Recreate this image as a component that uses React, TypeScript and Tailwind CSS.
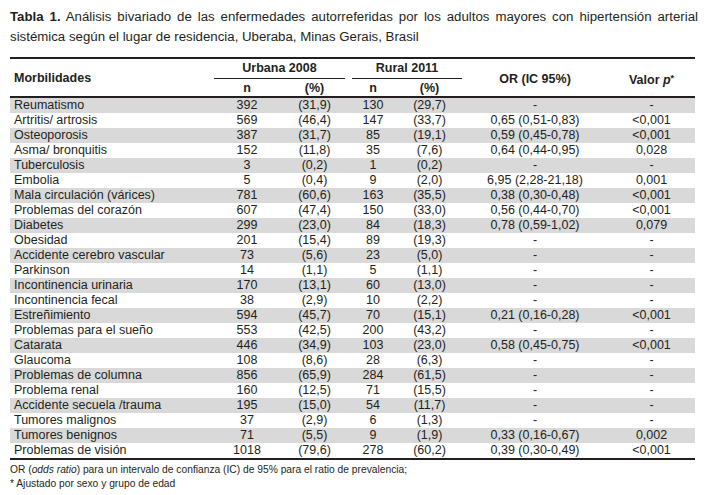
import React from "react";

// Tabla 1: morbilidades autorreferidas, urbana 2008 vs rural 2011
type Row = [string, string, string, string, string, string, string];

const rows: Row[] = [
  ["Reumatismo", "392", "(31,9)", "130", "(29,7)", "-", "-"],
  ["Artritis/ artrosis", "569", "(46,4)", "147", "(33,7)", "0,65 (0,51-0,83)", "<0,001"],
  ["Osteoporosis", "387", "(31,7)", "85", "(19,1)", "0,59 (0,45-0,78)", "<0,001"],
  ["Asma/ bronquitis", "152", "(11,8)", "35", "(7,6)", "0,64 (0,44-0,95)", "0,028"],
  ["Tuberculosis", "3", "(0,2)", "1", "(0,2)", "-", "-"],
  ["Embolia", "5", "(0,4)", "9", "(2,0)", "6,95 (2,28-21,18)", "0,001"],
  ["Mala circulación (várices)", "781", "(60,6)", "163", "(35,5)", "0,38 (0,30-0,48)", "<0,001"],
  ["Problemas del corazón", "607", "(47,4)", "150", "(33,0)", "0,56 (0,44-0,70)", "<0,001"],
  ["Diabetes", "299", "(23,0)", "84", "(18,3)", "0,78 (0,59-1,02)", "0,079"],
  ["Obesidad", "201", "(15,4)", "89", "(19,3)", "-", "-"],
  ["Accidente cerebro vascular", "73", "(5,6)", "23", "(5,0)", "-", "-"],
  ["Parkinson", "14", "(1,1)", "5", "(1,1)", "-", "-"],
  ["Incontinencia urinaria", "170", "(13,1)", "60", "(13,0)", "-", "-"],
  ["Incontinencia fecal", "38", "(2,9)", "10", "(2,2)", "-", "-"],
  ["Estreñimiento", "594", "(45,7)", "70", "(15,1)", "0,21 (0,16-0,28)", "<0,001"],
  ["Problemas para el sueño", "553", "(42,5)", "200", "(43,2)", "-", "-"],
  ["Catarata", "446", "(34,9)", "103", "(23,0)", "0,58 (0,45-0,75)", "<0,001"],
  ["Glaucoma", "108", "(8,6)", "28", "(6,3)", "-", "-"],
  ["Problemas de columna", "856", "(65,9)", "284", "(61,5)", "-", "-"],
  ["Problema renal", "160", "(12,5)", "71", "(15,5)", "-", "-"],
  ["Accidente secuela /trauma", "195", "(15,0)", "54", "(11,7)", "-", "-"],
  ["Tumores malignos", "37", "(2,9)", "6", "(1,3)", "-", "-"],
  ["Tumores benignos", "71", "(5,5)", "9", "(1,9)", "0,33 (0,16-0,67)", "0,002"],
  ["Problemas de visión", "1018", "(79,6)", "278", "(60,2)", "0,39 (0,30-0,49)", "<0,001"],
];

export default function App() {
  return (
    <div className="w-[708px] h-[495px] bg-white px-[10px] pt-[7px] text-[#231f20] font-['Liberation_Sans',Arial,sans-serif]">
      {/* título */}
      <div className="text-[13.25px] leading-[20px]">
        <p className="whitespace-nowrap text-justify [text-align-last:justify]">
          <b>Tabla 1.</b> Análisis bivariado de las enfermedades autorreferidas por los adultos mayores con hipertensión arterial
        </p>
        <p>sistémica según el lugar de residencia, Uberaba, Minas Gerais, Brasil</p>
      </div>

      <table className="mt-[10px] w-[685px] table-fixed border-collapse text-[12.5px] leading-[15px]">
        <colgroup>
          <col className="w-[204px]" />
          <col className="w-[66px]" />
          <col className="w-[69px]" />
          <col className="w-[48px]" />
          <col className="w-[65px]" />
          <col className="w-[146px]" />
          <col className="w-[87px]" />
        </colgroup>
        <thead>
          <tr className="border-t-2 border-[#231f20]">
            <th rowSpan={2} className="text-left font-bold pl-[4px] pt-[2px]">Morbilidades</th>
            <th colSpan={2} className="p-0 font-bold h-[19px] align-bottom">
              <div className="mr-[4px] border-b border-[#231f20] pb-[2px] pt-[2px]">Urbana 2008</div>
            </th>
            <th colSpan={2} className="p-0 font-bold h-[19px] align-bottom">
              <div className="ml-[3px] border-b border-[#231f20] pb-[2px] pt-[2px]">Rural 2011</div>
            </th>
            <th rowSpan={2} className="font-bold pt-[3px]">OR (IC 95%)</th>
            <th rowSpan={2} className="font-bold pt-[4px]">
              Valor <i>p</i>
              <span className="text-[9px] align-[3px]">*</span>
            </th>
          </tr>
          <tr className="border-b-2 border-[#231f20]">
            <th className="font-bold h-[18px] pt-[1px]">n</th>
            <th className="font-bold pt-[1px]">(%)</th>
            <th className="font-bold pt-[1px]">n</th>
            <th className="font-bold pt-[1px]">(%)</th>
          </tr>
        </thead>
        <tbody className="border-b-2 border-[#231f20]">
          {rows.map((r, i) => (
            <tr key={r[0]} className={i % 2 === 0 ? "bg-[#d9d9d9]" : "bg-white"}>
              <td className="h-[15px] p-0 pl-[4px] whitespace-nowrap">{r[0]}</td>
              <td className="p-0 text-center">{r[1]}</td>
              <td className="p-0 text-center">{r[2]}</td>
              <td className="p-0 text-center">{r[3]}</td>
              <td className="p-0 text-center">{r[4]}</td>
              <td className="p-0 text-center">{r[5]}</td>
              <td className="p-0 text-center">{r[6]}</td>
            </tr>
          ))}
        </tbody>
      </table>

      {/* notas */}
      <div className="mt-[3px] text-[10.25px] leading-[14px]">
        <p>
          OR (<i>odds ratio</i>) para un intervalo de confianza (IC) de 95% para el ratio de prevalencia;
        </p>
        <p>* Ajustado por sexo y grupo de edad</p>
      </div>
    </div>
  );
}
